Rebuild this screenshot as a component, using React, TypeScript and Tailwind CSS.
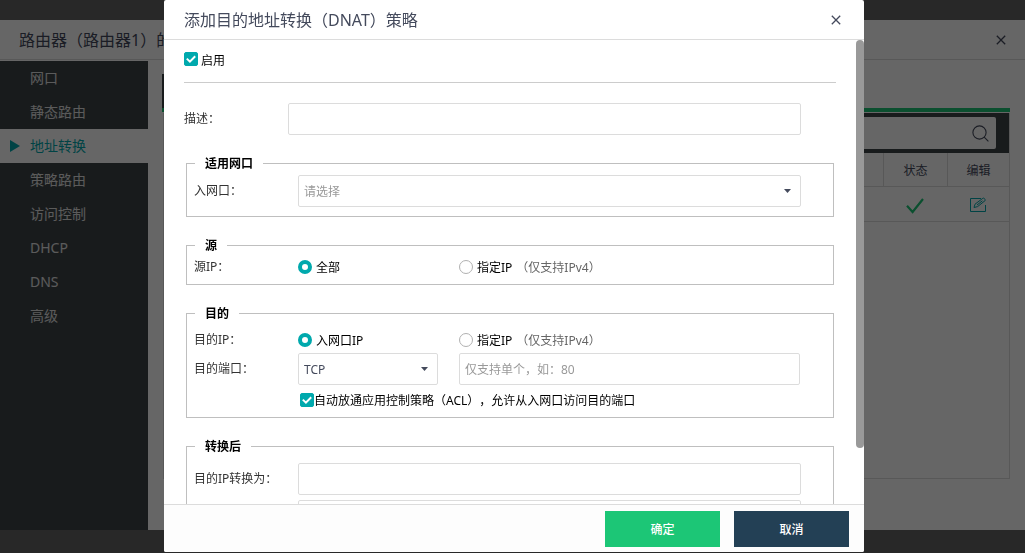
import type { ReactNode } from "react";
import clsx from "clsx";

const menuItems = [
  { label: "网口" },
  { label: "静态路由" },
  { label: "地址转换", active: true },
  { label: "策略路由" },
  { label: "访问控制" },
  { label: "DHCP" },
  { label: "DNS" },
  { label: "高级" },
];

const inputClass =
  "h-8 rounded-xs border border-[#dcdcdc] bg-white px-[5px] text-xs text-[#444a5c] placeholder-[#999] outline-none";

function CloseIcon() {
  return (
    <svg width="10" height="10" viewBox="0 0 10 10" fill="none" stroke="currentColor" strokeWidth="1.3">
      <path d="M0.8 0.8 9.2 9.2M9.2 0.8 0.8 9.2" />
    </svg>
  );
}

function Checkbox({ id }: { id: string }) {
  return (
    <span className="grid size-3.5 shrink-0">
      <input
        id={id}
        type="checkbox"
        defaultChecked
        className="col-start-1 row-start-1 size-3.5 appearance-none rounded-xs border border-[#bbb] checked:border-[#00a9ad] checked:bg-[#00a9ad]"
      />
      <svg
        viewBox="0 0 14 14"
        fill="none"
        stroke="white"
        strokeWidth="2"
        className="pointer-events-none col-start-1 row-start-1 size-3.5"
      >
        <path d="M2.8 6.6 5.9 9.6 11.2 4.2" />
      </svg>
    </span>
  );
}

function Radio({ name, label, hint, checked }: { name: string; label: string; hint?: string; checked?: boolean }) {
  return (
    <label className="flex h-3.5 items-center gap-1 whitespace-nowrap text-black">
      <input
        type="radio"
        name={name}
        defaultChecked={checked}
        className="size-3.5 shrink-0 appearance-none rounded-full border border-[#b0b0b0] bg-white checked:border-4 checked:border-[#00a9ad]"
      />
      <span className="pt-0.5">{label}</span>
      {hint && <span className="pt-0.5 text-[#666]">{hint}</span>}
    </label>
  );
}

function Select({ id, options, className }: { id: string; options: string[]; className?: string }) {
  return (
    <div className={clsx("grid", className)}>
      <select
        id={id}
        className={clsx(
          inputClass,
          "col-start-1 row-start-1 w-full appearance-none pt-0.5",
          options[0] === "请选择" && "text-[#999]"
        )}
      >
        {options.map((o) => (
          <option key={o}>{o}</option>
        ))}
      </select>
      <svg
        width="7"
        height="4"
        viewBox="0 0 7 4"
        fill="#444a5c"
        className="pointer-events-none col-start-1 row-start-1 mr-[10px] self-center justify-self-end"
      >
        <path d="M0 0h7L3.5 4z" />
      </svg>
    </div>
  );
}

function Group({ title, className, children }: { title: string; className?: string; children: ReactNode }) {
  return (
    <fieldset className={clsx("mr-0.5 ml-0.5 min-w-0 border border-[#bfbfbf] pr-8 pl-[7px]", className)}>
      <legend className="h-[18px] pr-2.5 pl-2.5 leading-5 font-bold text-black ml-px">{title}</legend>
      {children}
    </fieldset>
  );
}

function Row({ label, htmlFor, children }: { label?: string; htmlFor?: string; children: ReactNode }) {
  return (
    <div className="flex items-center">
      {htmlFor ? (
        <label htmlFor={htmlFor} className="h-5 w-[104px] shrink-0 leading-5">
          {label}
        </label>
      ) : (
        <span className="-my-1 h-5 w-[104px] shrink-0 leading-5">{label}</span>
      )}
      {children}
    </div>
  );
}

function RouterPage() {
  return (
    <div className="flex h-screen flex-col bg-[#646464] pt-5 pb-[23px]">
      <header className="flex h-10 shrink-0 items-center justify-between border-b border-[#dcdcdc] bg-white pr-[19px] pl-[19px] text-[#444a5c]">
        <h1 className="text-base">路由器（路由器1）的</h1>
        <button type="button" aria-label="关闭">
          <CloseIcon />
        </button>
      </header>
      <div className="flex min-h-0 flex-1 bg-white pt-px">
        <nav className="w-[148px] shrink-0 bg-[#3c4448]">
          <ul>
            {menuItems.map((item) => (
              <li key={item.label}>
                <a
                  href="#"
                  className={clsx(
                    "flex h-[34px] items-center pl-[10px] text-sm",
                    item.active ? "bg-white text-[#00a9ad]" : "text-[#e4e4e4]"
                  )}
                >
                  <span className="w-5">
                    {item.active && (
                      <svg width="10" height="12" viewBox="0 0 10 12" fill="currentColor">
                        <path d="M0 0v12l10-6z" />
                      </svg>
                    )}
                  </span>
                  {item.label}
                </a>
              </li>
            ))}
          </ul>
        </nav>
        <main className="min-w-0 flex-1 pt-[13px] pr-[15px] pb-[51px] pl-[14px]">
          <div className="flex h-full flex-col">
            <div className="h-[34px] w-24 shrink-0 bg-[#3c4448]" />
            <div className="h-1 shrink-0 bg-[#1cc676]" />
            <div className="mt-px ml-px flex-1 border-r border-b border-l border-[#dcdcdc]">
              <div className="flex h-10 justify-end bg-[#3c4448] py-1 pr-[13px]">
                <div className="flex w-72 items-center rounded-xs bg-white pr-[7px]">
                  <input type="text" aria-label="搜索" className="h-8 min-w-0 flex-1 outline-none" />
                  <button type="button" aria-label="搜索">
                    <svg width="17" height="17" viewBox="0 0 17 17" fill="none" stroke="#444a5c" strokeWidth="1.1">
                      <circle cx="7.5" cy="7.5" r="6.6" />
                      <path d="m12.2 12.2 4.2 4.2" />
                    </svg>
                  </button>
                </div>
              </div>
              <table className="w-full table-fixed border-separate border-spacing-0 text-xs text-[#444a5c]">
                <thead>
                  <tr className="h-[34px]">
                    <th className="border-b border-[#dcdcdc]" />
                    <th className="w-16 border-b border-l border-[#dcdcdc] pt-0.5 font-normal">状态</th>
                    <th className="w-[62px] border-b border-l border-[#dcdcdc] pt-0.5 font-normal">编辑</th>
                  </tr>
                </thead>
                <tbody>
                  <tr className="h-[35px]">
                    <td className="border-b border-[#dcdcdc]" />
                    <td className="border-b border-[#dcdcdc]">
                      <svg width="18" height="16" viewBox="0 0 18 16" fill="none" stroke="#1cc676" strokeWidth="2.2" className="mx-auto mt-1">
                        <path d="M1 7.8 6.6 14 17 1" />
                      </svg>
                    </td>
                    <td className="border-b border-[#dcdcdc]">
                      <button type="button" aria-label="编辑" className="mx-auto block">
                        <svg width="17" height="15" viewBox="0 0 17 15" fill="none" stroke="#00a9ad">
                          <path d="M11 1.5H.5v13h15V8" />
                          <path d="m4 10.5 1-3.3L12.8 1.3q.6-.4 1.1 0l1.3 1.2q.4.5-.1 1.1L7.6 9.6 4 10.5M7 8l5.4-4.2" />
                        </svg>
                      </button>
                    </td>
                  </tr>
                </tbody>
              </table>
            </div>
          </div>
        </main>
      </div>
    </div>
  );
}

function DnatDialog() {
  return (
    <div
      role="dialog"
      aria-labelledby="dnat-title"
      className="relative flex w-full max-w-[700px] flex-col overflow-hidden rounded-xs bg-white text-xs text-[#333]"
    >
      <header className="flex h-10 shrink-0 items-center justify-between border-b border-[#dcdcdc] pr-[23px] pl-5 text-[#444a5c]">
        <h2 id="dnat-title" className="text-base">添加目的地址转换（DNAT）策略</h2>
        <button type="button" aria-label="关闭">
          <CloseIcon />
        </button>
      </header>

      <div className="relative min-h-0 flex-1">
        <form className="flex h-full flex-col gap-[19px] overflow-y-auto pr-7 pb-6 pl-5 [scrollbar-width:none] *:shrink-0">
          <div className="flex h-[43px] items-center gap-[3px] border-b border-[#ccc] pb-1">
            <Checkbox id="enable" />
            <label htmlFor="enable" className="pt-1 text-black">启用</label>
          </div>

          <div className="mt-px flex items-center pr-[35px]">
            <label htmlFor="desc" className="w-[104px] shrink-0">描述：</label>
            <input id="desc" type="text" className={clsx(inputClass, "min-w-0 flex-1")} />
          </div>

          <Group title="适用网口" className="pt-[3px] pb-[9px]">
            <Row label="入网口：" htmlFor="in-port">
              <Select id="in-port" options={["请选择", "eth0", "eth1"]} className="flex-1" />
            </Row>
          </Group>

          <Group title="源" className="pt-1.5 pb-2.5">
            <Row label="源IP：">
              <div className="flex">
                <div className="w-[161px]">
                  <Radio name="src" label="全部" checked />
                </div>
                <Radio name="src" label="指定IP" hint="（仅支持IPv4）" />
              </div>
            </Row>
          </Group>

          <Group title="目的" className="pt-[11px] pb-2.5">
            <Row label="目的IP：">
              <div className="flex">
                <div className="w-[161px]">
                  <Radio name="dst" label="入网口IP" checked />
                </div>
                <Radio name="dst" label="指定IP" hint="（仅支持IPv4）" />
              </div>
            </Row>
            <div className="mt-1.5">
              <Row label="目的端口：" htmlFor="proto">
                <Select id="proto" options={["TCP", "UDP"]} className="mr-[21px] w-[140px]" />
                <input
                  type="text"
                  aria-label="端口"
                  placeholder="仅支持单个，如：80"
                  className={clsx(inputClass, "mr-px min-w-0 flex-1")}
                />
              </Row>
            </div>
            <div className="mt-2 ml-[106px] flex h-3.5 items-center">
              <Checkbox id="acl" />
              <label htmlFor="acl" className="pt-0.5 whitespace-nowrap text-black [text-spacing-trim:space-all]">
                自动放通应用控制策略（ACL），允许从入网口访问目的端口
              </label>
            </div>
          </Group>

          <Group title="转换后" className="pt-2 pb-[9px]">
            <div className="flex flex-col gap-[5px]">
              <Row label="目的IP转换为：" htmlFor="to-ip">
                <input id="to-ip" type="text" className={clsx(inputClass, "min-w-0 flex-1")} />
              </Row>
              <Row>
                <input type="text" aria-label="目的端口转换为" className={clsx(inputClass, "min-w-0 flex-1")} />
              </Row>
            </div>
          </Group>
        </form>
        {/* Scroll thumb */}
        <div className="absolute top-0 right-0 h-[88%] w-2 rounded-full bg-[#999]" />
      </div>

      <footer className="flex h-12 shrink-0 items-center justify-end gap-3.5 border-t border-[#dcdcdc] bg-[#fdfdfd] pr-[15px]">
        <button type="button" className="h-9 w-[115px] bg-[#1cc676] pt-0.5 font-medium text-white">确定</button>
        <button type="button" className="h-9 w-[115px] bg-[#234055] pt-0.5 font-medium text-white">取消</button>
      </footer>
    </div>
  );
}

export default function App() {
  return (
    <div className="font-['Noto_Sans','Noto_Sans_CJK_SC',sans-serif]">
      <RouterPage />
      <div className="fixed inset-0 flex justify-center bg-black/60 pb-px pl-[3px]">
        <DnatDialog />
      </div>
    </div>
  );
}
